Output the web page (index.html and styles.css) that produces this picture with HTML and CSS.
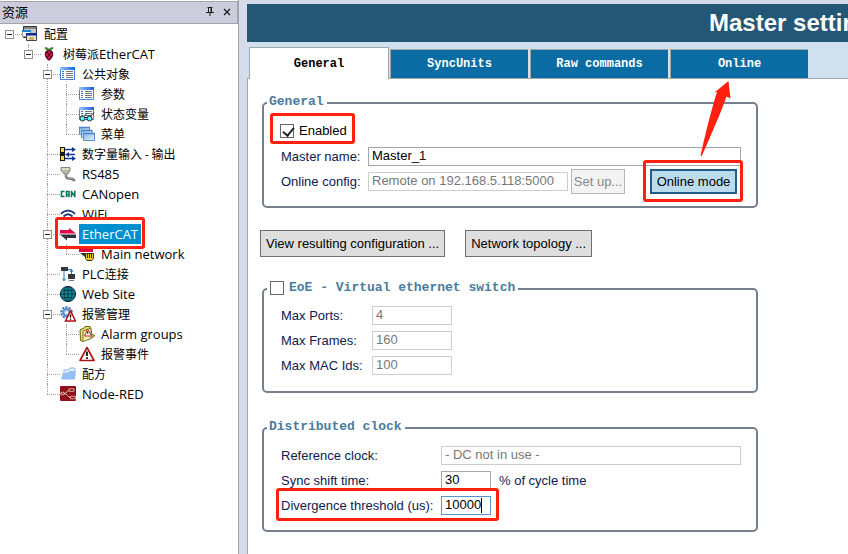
FILE: index.html
```
<!DOCTYPE html>
<html lang="zh-CN">
<head>
<meta charset="utf-8">
<title>Master settings</title>
<link rel="stylesheet" href="styles.css">
</head>
<body>
<svg class="defs" aria-hidden="true">
  <defs>
    <linearGradient id="bar"><stop offset="0" stop-color="#9cc4f8"/><stop offset="1" stop-color="#1460e0"/></linearGradient>
    <linearGradient id="win" x2="1" y2="1"><stop offset="0" stop-color="#8fb6e6"/><stop offset="1" stop-color="#e6f0fb"/></linearGradient>
    <symbol id="list" viewBox="0 0 16 16">
      <path d="M.5 2.500h14v11H.5z" fill="#fff" stroke="#4a80d8"/>
      <path d="M0 1h15v3H0z" fill="url(#bar)"/>
      <path d="M2 5.500h2M2 7.500h2M2 9.500h2M2 11.500h2" stroke="#3c6ec8"/>
      <path d="M6 5.500h7M6 7.500h7M6 9.500h7M6 11.500h7" stroke="#777"/>
    </symbol>
  </defs>
</svg>
<div class="app">
  <aside class="sidebar">
    <header class="side-head">
      <h2>资源</h2>
      <button type="button" aria-label="Pin"><svg viewBox="0 0 8 9" width="8" height="9"><path d="M2.500 0v5M5 0v5M1.500.500h5M0 5.500h8M4 6v3" fill="none" stroke="#222"/><path d="M5 0h1v5H5z" fill="#222"/></svg></button>
      <button type="button" aria-label="Close"><svg viewBox="0 0 8 8" width="8" height="8"><path d="M1 1l6 6M7 1L1 7" stroke="#222" stroke-width="1.400"/></svg></button>
    </header>
    <ul class="tree">
      <li>
        <div class="row"><button type="button" class="toggle" aria-label="Collapse"></button>
          <svg class="icon" viewBox="0 0 16 16"><path d="M1.500.500h13v11h-13z" fill="#c8c8c8" stroke="#333"/><path d="M2 1h12v2H2z" fill="#888"/><path d="M.500 4.500h8v6h-8z" fill="#e8f4ff" stroke="#999"/><path d="M0 4h9v2H0z" fill="#1088e0"/><path d="M4.500 8.500h10V14.500h-10z" fill="#e4e4e4" stroke="#444"/><path d="M4 7h11v2.500H4z" fill="#102c90"/><path d="M7 11h5v3H7z" fill="#e4c040"/><path d="M8 12.500h3" stroke="#998"/></svg>
          <span class="label">配置</span></div>
        <ul>
          <li>
            <div class="row"><button type="button" class="toggle" aria-label="Collapse"></button>
              <svg class="icon" viewBox="0 0 16 16"><path d="M8 4.500C6 4.500 3.500 3.500 3.500 1.500 5.500 1 7 1.500 8 3c1-1.500 2.500-2 4.500-1.500C12.500 3.500 10 4.500 8 4.500z" fill="#3b8a32"/><path d="M8 4c3 0 4 1.500 4 3 1 2-.500 4-1.500 5.500C9.500 14 8.500 14.500 8 14.500s-1.500-.500-2.500-2C4.500 11 3 9 4 7c0-1.500 1-3 4-3z" fill="#4c0620"/><circle cx="8" cy="6" r="1.300" fill="#c81848"/><circle cx="6" cy="8.600" r="1.600" fill="#c81848"/><circle cx="10" cy="8.600" r="1.600" fill="#c81848"/><circle cx="8" cy="11.500" r="1.500" fill="#c81848"/></svg>
              <span class="label">树莓派<span class="latin">EtherCAT</span></span></div>
            <ul>
              <li>
                <div class="row"><button type="button" class="toggle" aria-label="Collapse"></button>
                  <svg class="icon"><use href="#list"/></svg><span class="label">公共对象</span></div>
                <ul>
                  <li><div class="row"><svg class="icon"><use href="#list"/></svg><span class="label">参数</span></div></li>
                  <li><div class="row"><svg class="icon" viewBox="0 0 16 16"><use href="#list" width="16" height="16"/><path d="M5 10.500l3-3M11.500 10.500l3.500-4" stroke="#222"/><path d="M5 11.500h5" fill="none" stroke="#222"/><circle cx="3.500" cy="12.500" r="2.500" fill="#5ff" stroke="#222"/><circle cx="10.500" cy="12.500" r="2.500" fill="#5ff" stroke="#222"/></svg><span class="label">状态变量</span></div></li>
                  <li><div class="row"><svg class="icon" viewBox="0 0 16 16"><g fill="url(#win)" stroke="#5d8fd0"><path d="M.500 1.500h10v7H.500z"/><path d="M2.500 4.500h10.500v7H2.500z"/><path d="M4.500 7.500h11v7h-11z"/></g><path d="M0 1.500h11M2 4.500h11.500M4 7.500h12" stroke="#4a84cc" stroke-width="1.500"/></svg><span class="label">菜单</span></div></li>
                </ul>
              </li>
              <li><div class="row"><svg class="icon" viewBox="0 0 16 16"><path d="M0 1h5v14H0z" fill="#181818"/><path d="M1 2h3v4H1zM1 10h3v4H1z" fill="#f8e020"/><path d="M5 3.500h9M7 8.500h8M5 12.500h9" stroke="#183898" stroke-width="1.300"/><path d="M12 1l4 2.500L12 6zM9 6L5 8.500 9 11zM12 10l4 2.500-4 2.500z" fill="#183898"/></svg><span class="label">数字量输入 - 输出</span></div></li>
              <li><div class="row"><svg class="icon" viewBox="0 0 16 16"><path d="M1 1.500h9v3L8 8H4L1 4.500z" fill="#b8b8b0" stroke="#888"/><path d="M2 2h7v2H2z" fill="#e4dcae"/><path d="M6 8c-.500 4 1.500 4.500 4 4.500 2 0 3.500 0 4.500 2.500" fill="none" stroke="#666" stroke-width="2.600"/><path d="M6 8c0 3.500 1.500 4 4 4 2 0 3.500.500 4 2" fill="none" stroke="#ccc"/></svg><span class="label latin">RS485</span></div></li>
              <li><div class="row"><svg class="icon" viewBox="0 0 16 16"><path d="M4.500 5.500H1.500v5h3M6.500 11.300V5.500h2.500v5.800M6.500 8.800h2.500M11.500 11.300V4.800M14.800 11.300V4.800M11.500 6l3.300 4" fill="none" stroke="#087858" stroke-width="1.600"/></svg><span class="label latin">CANopen</span></div></li>
              <li><div class="row"><svg class="icon" viewBox="0 0 16 16" fill="none" stroke="#203878" stroke-width="1.800"><path d="M1 8c4-4.500 10-4.500 14 0"/><path d="M3.500 10.500c3-3 6-3 9 0"/><path d="M6 13c1.500-1.300 2.500-1.300 4 0"/></svg><span class="label latin">WiFi</span></div></li>
              <li>
                <div class="row"><button type="button" class="toggle" aria-label="Collapse"></button>
                  <svg class="icon" viewBox="0 0 16 16"><path d="M0 4h9V2l7 5.500H0z" fill="#e00840"/><path d="M0 8.500h16V12H7v2.500z" fill="#30323a"/></svg>
                  <span class="label latin selected">EtherCAT</span></div>
                <i class="mark mark-node"></i>
                <ul>
                  <li><div class="row"><svg class="icon" viewBox="0 0 16 16"><path d="M0 3h14v3H0z" fill="#e00840"/><path d="M1 7h9l-4 4z" fill="#30323a"/><path d="M6.500 7.500h8v5l-1.500 2h-5l-1.500-2z" fill="#f0c820" stroke="#333"/><path d="M8.500 7v5M10.500 7v5M12.500 7v5" stroke="#333"/></svg><span class="label latin">Main network</span></div></li>
                </ul>
              </li>
              <li><div class="row"><svg class="icon" viewBox="0 0 16 16"><path d="M4 5v9M7 3.500h4.500V8" fill="none" stroke="#2878c0"/><path d="M2.500 12.500L4 15l1.500-2.500M10 6l1.500-2.500L13 6" fill="none" stroke="#2878c0"/><path d="M1 1h7v4H1zM8 8h7v5H8z" fill="#303840"/><path d="M9 14.500h5" stroke="#777"/></svg><span class="label"><span class="latin">PLC</span>连接</span></div></li>
              <li><div class="row"><svg class="icon" viewBox="0 0 16 16"><circle cx="8" cy="8" r="7.600" fill="#07899c" stroke="#123"/><path d="M8 .500v15M.500 8h15M2.500 4.500h11M2.500 11.500h11" stroke="#102830" stroke-width=".8"/><ellipse cx="8" cy="8" rx="4" ry="7.500" fill="none" stroke="#102830" stroke-width=".8"/></svg><span class="label latin">Web Site</span></div></li>
              <li>
                <div class="row"><button type="button" class="toggle" aria-label="Collapse"></button>
                  <svg class="icon" viewBox="0 0 16 16"><circle cx="6.500" cy="6.500" r="5.300" fill="none" stroke="#4878b8" stroke-width="2" stroke-dasharray="2.200 1.100"/><circle cx="6.500" cy="6.500" r="3.400" fill="#a8c8f0" stroke="#5c8cd0" stroke-width="2"/><circle cx="6.500" cy="6.500" r="1.300" fill="#fff"/><path d="M10.500 5l5 10h-10z" fill="#fff" stroke="#b01010" stroke-width="1.500"/><path d="M10.500 8.500v3M10.500 12.500v1.300" stroke="#111" stroke-width="1.400"/></svg>
                  <span class="label">报警管理</span></div>
                <ul>
                  <li><div class="row"><svg class="icon" viewBox="0 0 16 16"><path d="M1 4l4-2 1-1.500h5l2 8 3 1-4 3-8 3-2.500-1z" fill="#e4dc70" stroke="#685c18"/><path d="M4 15V5l8-3v10" fill="#f4f0b8" stroke="#887820"/><path d="M8.500 3l4 7H5.500z" fill="#fff" stroke="#b03030"/><path d="M8.700 5v3" stroke="#222"/></svg><span class="label latin">Alarm groups</span></div></li>
                  <li><div class="row"><svg class="icon" viewBox="0 0 16 16"><path d="M8 1.500l7 13H1z" fill="#fff" stroke="#a81414" stroke-width="1.600" stroke-linejoin="round"/><path d="M8 5.500v4.500M8 11.200v1.800" stroke="#111" stroke-width="1.800"/></svg><span class="label">报警事件</span></div></li>
                </ul>
              </li>
              <li><div class="row"><svg class="icon" viewBox="0 0 16 16"><path d="M4 6V4h5l1-2h5v8" fill="#e8f3ff" stroke="#88b4ec"/><path d="M1 13.500l2-7h5l1.500-1.500H15v8.500z" fill="#94bef4"/></svg><span class="label">配方</span></div></li>
              <li><div class="row"><svg class="icon" viewBox="0 0 16 16"><rect y="0" width="16" height="15" rx="1" fill="#8f1014"/><path d="M0 7.500h4c3 0 3-3.500 6-3.500M4 7.500c4 0 3 4 7 4" fill="none" stroke="#e8c8c8"/><path d="M9 2.800h5v2.500H9zM10.500 10.300h5v2.500h-5zM1 6.300h3v2.500H1z" fill="#8f1014" stroke="#e8c8c8" stroke-width=".8"/></svg><span class="label latin">Node-RED</span></div></li>
            </ul>
          </li>
        </ul>
      </li>
    </ul>
  </aside>

  <main class="main">
    <header class="title"><h1>Master settings</h1></header>
    <nav class="tabs">
      <button type="button" class="tab active">General</button>
      <button type="button" class="tab">SyncUnits</button>
      <button type="button" class="tab">Raw commands</button>
      <button type="button" class="tab">Online
        <svg class="arrow" viewBox="0 0 32 76" width="32" height="76" aria-hidden="true"><path d="M.800 73.500C5 54 11 30 17 11L14.500 11.500 28.500 0 30.500 17.500 26.500 15.500C20 34 11 54 1.800 75Q.400 75.500 .800 73.500z" fill="#ff2010"/></svg>
      </button>
    </nav>
    <form class="panel">
      <fieldset class="group general">
        <legend>General</legend>
        <div class="check-row">
          <input type="checkbox" id="enabled" checked><label for="enabled">Enabled</label>
          <i class="mark mark-enabled"></i>
        </div>
        <div class="field"><label for="name">Master name:</label><input class="grow" type="text" id="name" value="Master_1"></div>
        <div class="field">
          <label for="config">Online config:</label><input class="config" type="text" id="config" value="Remote on 192.168.5.118:5000" disabled>
          <button type="button" class="setup" disabled>Set up...</button>
          <span class="mode-wrap"><button type="button" class="mode">Online mode</button><i class="mark mark-mode"></i></span>
        </div>
      </fieldset>

      <div class="actions">
        <button type="button">View resulting configuration ...</button>
        <button type="button">Network topology ...</button>
      </div>

      <fieldset class="group eoe">
        <legend><span class="legend-check"><input type="checkbox" id="eoe"><label for="eoe">EoE - Virtual ethernet switch</label></span></legend>
        <div class="field"><label for="ports">Max Ports:</label><input class="medium" type="text" id="ports" value="4" disabled></div>
        <div class="field"><label for="frames">Max Frames:</label><input class="medium" type="text" id="frames" value="160" disabled></div>
        <div class="field"><label for="macs">Max MAC Ids:</label><input class="medium" type="text" id="macs" value="100" disabled></div>
      </fieldset>

      <fieldset class="group clock">
        <legend>Distributed clock</legend>
        <div class="field"><label for="ref">Reference clock:</label><input class="grow" type="text" id="ref" value="- DC not in use -" disabled></div>
        <div class="field"><label for="shift">Sync shift time:</label><input class="short" type="text" id="shift" value="30"><span class="unit">% of cycle time</span></div>
        <div class="field"><label for="div">Divergence threshold (us):</label><span class="caret-box"><input class="short focus" type="text" id="div" value="10000"><i class="caret"></i></span><i class="mark mark-div"></i></div>
      </fieldset>
    </form>
  </main>
</div>
</body>
</html>
```
FILE: styles.css
```
* { box-sizing: border-box; }

body {
  margin: 0;
  overflow: hidden;
  background: #d6dbe9;
  color: #000;
  font: 13px/20px "Liberation Sans", Arial, sans-serif;
}

button, input { font: inherit; margin: 0; }
button { padding: 0; cursor: pointer; }
h1, h2, ul { margin: 0; padding: 0; }

.defs { position: absolute; width: 0; height: 0; }

.app { display: flex; min-height: 100vh; }

/* resource tree */
.sidebar {
  flex: 0 0 239px;
  padding-top: 1px;
  background: #fff;
  border-right: 1px solid #a3a3ad;
  font: 12px/20px "Noto Sans CJK SC", sans-serif;
}

.side-head {
  display: flex;
  align-items: center;
  gap: 9px;
  height: 23px;
  padding: 0 6px 2px 2px;
  background: #ccccdc;
  border: 1px solid #a3a3ad;
  border-left: 0;
}
.side-head h2 { flex: 1; font-size: 13px; font-weight: 400; }
.side-head button { display: flex; border: 0; background: none; }

.tree, .tree ul { list-style: none; }
.tree ul { margin-left: 19px; }
.tree li { position: relative; }
.tree ul > li::before {
  content: "";
  position: absolute;
  left: 9px;
  top: 0;
  height: 100%;
  border-left: 1px dotted #a0a0a0;
}
.tree ul > li:last-child::before { height: 10px; }

.row {
  position: relative;
  display: flex;
  align-items: center;
  height: 20px;
  padding-left: 22px;
  white-space: nowrap;
}
.row::before {
  content: "";
  position: absolute;
  left: 9px;
  top: 10px;
  width: 13px;
  border-top: 1px dotted #a0a0a0;
}
.toggle {
  position: absolute;
  left: 5px;
  top: 6px;
  width: 9px;
  height: 9px;
  background: linear-gradient(#222, #222) center / 5px 1px no-repeat #fff;
  border: 1px solid #919191;
}
.icon { position: relative; flex: none; width: 16px; height: 16px; margin-right: 3px; }
.label { padding: 0 3px; }
.latin { font-family: "Open Sans", "Noto Sans", sans-serif; font-size: 13px; }
.selected { background: #0090d0; color: #fff; }

/* settings page */
.main {
  flex: 1;
  min-width: 0;
  display: flex;
  flex-direction: column;
  margin: 4px 0 0 8px;
  background: #cfe0ee;
}

.title {
  height: 38px;
  padding-left: 462px;
  overflow: hidden;
  background: #235775;
  color: #fff;
}
.title h1 { font-size: 24px; line-height: 38px; white-space: nowrap; }

.tabs {
  display: flex;
  align-items: flex-end;
  gap: 2px;
  height: 37px;
  padding-left: 2px;
  box-shadow: inset 0 -1px #a3a7ab;
}
.tab {
  position: relative;
  flex: 0 0 138px;
  height: 30px;
  background: #0a6ca2;
  border: 1px solid #a3a7ab;
  border-right: 0;
  color: #fff;
  font: bold 12px/28px "Liberation Mono", monospace;
}
.tab.active {
  flex-basis: 140px;
  height: 32px;
  margin-right: -1px;
  background: #fff;
  border-right: 1px solid #a3a7ab;
  border-bottom: 0;
  color: #000;
}
.arrow { position: absolute; left: 29px; top: 31px; z-index: 2; overflow: visible; }

.panel {
  flex: 1;
  padding: 16px 13px 22px 12px;
  background: #fff;
  border-left: 1px solid #a3a7ab;
}

.group {
  max-width: 496px;
  min-width: 0;
  margin: 0 0 0 2px;
  border: 2px solid #74808e;
  border-radius: 5px;
}
.general { padding: 10px 15px 12px 16px; }
.eoe { margin-top: 24px; padding: 6px 15px 13px 16px; }
.clock { margin-top: 27px; padding: 7px 15px 12px 16px; }

legend {
  height: 16px;
  margin-left: -13px;
  padding: 0 3px 0 2px;
  color: #4a7c9e;
  font: bold 13px/14px "Liberation Mono", monospace;
}
.legend-check { display: flex; align-items: center; gap: 5px; padding-left: 1px; }

input[type="checkbox"] {
  appearance: none;
  flex: none;
  width: 14px;
  height: 14px;
  background: #fff;
  border: 1px solid #666;
}
input[type="checkbox"]:checked::before {
  content: "";
  display: block;
  width: 5px;
  height: 9px;
  margin-left: 4px;
  border: solid #222;
  border-width: 0 2px 2px 0;
  transform: rotate(40deg);
}

.check-row {
  position: relative;
  display: flex;
  align-items: center;
  gap: 5px;
  height: 20px;
  margin-bottom: 3px;
}

.field {
  position: relative;
  display: flex;
  align-items: center;
  height: 25px;
  white-space: nowrap;
}
.field > label { flex: 0 0 88px; padding-left: 1px; color: #0c2050; }
.eoe .field > label { flex-basis: 92px; }
.clock .field > label { flex-basis: 161px; }

input[type="text"] {
  width: 50px;
  height: 19px;
  padding: 0 3px 2px;
  background: #fff;
  border: 1px solid #a3a7ab;
  border-radius: 0;
  color: #000;
}
input[type="text"]:disabled { border-color: #cdcdcd; color: #777; }
input.grow { flex: 1; min-width: 0; }
input.config { width: 200px; }
input.medium { width: 80px; }
input.focus { border-color: #5596d8; }
.unit { margin-left: 8px; color: #0c2050; }
.caret-box { position: relative; display: flex; }
.caret { position: absolute; left: 40px; top: 2px; width: 1px; height: 15px; background: #000; }

.setup, .mode { height: 25px; }
.setup { width: 54px; margin-left: 3px; background: #f3f3f3; border: 1px solid #b4b8bc; color: #888; }
.mode-wrap { position: relative; display: flex; margin: 0 4px 0 auto; }
.mode { width: 87px; background: #bbdcec; border: 2px solid #235c85; color: #000; }

.actions { display: flex; gap: 20px; margin-top: 22px; }
.actions button {
  height: 27px;
  padding: 0 5px;
  background: #dedede;
  border: 1px solid #707070;
  color: #000;
}

/* red callouts */
.mark {
  position: absolute;
  z-index: 1;
  border: 3px solid #ff2010;
  border-radius: 3px;
  pointer-events: none;
}
.mark-node { left: 17px; top: -7px; width: 90px; height: 32px; }
.mark-enabled { left: -10px; top: -8px; width: 85px; height: 31px; }
.mark-mode { inset: -9px -6px -8px -7px; }
.mark-div { left: -4px; top: -5px; width: 223px; height: 33px; }
```
